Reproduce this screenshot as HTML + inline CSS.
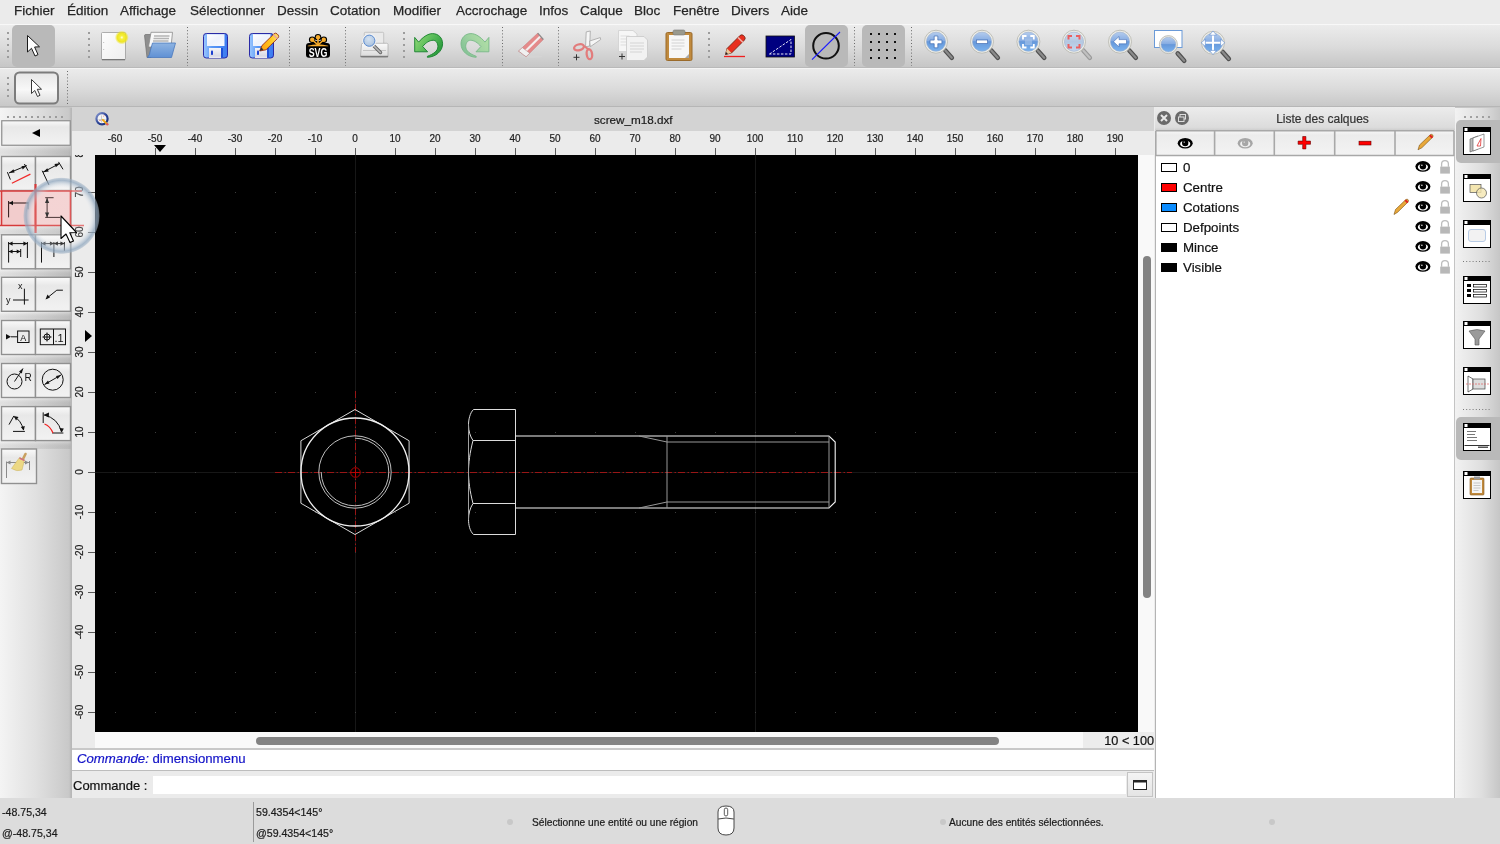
<!DOCTYPE html>
<html><head><meta charset="utf-8">
<style>
*{box-sizing:border-box;margin:0;padding:0}
html,body{width:1500px;height:844px;overflow:hidden;background:#ececec;font-family:"Liberation Sans",sans-serif;color:#222;position:relative}
body{will-change:transform}
div.a{-webkit-text-stroke:0.2px currentColor}
.a{position:absolute}
#menubar{left:0;top:0;width:1500px;height:24px;background:#ebebeb}
#menubar span{position:absolute;top:3px;font-size:13.5px;color:#262626;white-space:nowrap;-webkit-text-stroke:0.25px #262626}
#tb1{left:0;top:24px;width:1500px;height:44px;background:linear-gradient(#f8f8f8 0,#f8f8f8 1px,#ececec 1px,#dcdcdc 50%,#c6c6c6 43px,#b9b9b9 43px)}
#tb2{left:0;top:68px;width:1500px;height:39px;background:linear-gradient(#f4f4f4 0,#f4f4f4 1px,#ebebeb 1px,#dcdcdc 50%,#c8c8c8 38px,#b6b6b6 38px)}
#gapline{left:0;top:107px;width:1500px;height:1px;background:#c6c6c6}
#leftdock{left:0;top:108px;width:72px;height:690px;background:linear-gradient(90deg,#f2f2f2,#dadada 70%,#c8c8c8);border-right:1px solid #bdbdbd}
#tabhdr{left:72px;top:107px;width:1082px;height:24px;background:#d3d3d3}
#vscroll{left:1138px;top:155px;width:16px;height:577px;background:#f7f7f7}
#hscroll{left:95px;top:732px;width:988px;height:16px;background:#f7f7f7}
#gridlbl{left:1083px;top:732px;width:71px;height:16px;background:#ececec;font-size:13px;text-align:right;line-height:17px;color:#111}
#cmdhist{left:72px;top:749px;width:1082px;height:22px;background:#fff;border-top:1px solid #c6c6c6;border-bottom:1px solid #c6c6c6}
#cmdrow{left:72px;top:771px;width:1082px;height:27px;background:#ececec}
#rpanel{left:1155px;top:108px;width:300px;height:690px;background:#fff;border-left:1px solid #c8c8c8}
#rdock{left:1455px;top:108px;width:45px;height:690px;background:linear-gradient(90deg,#f0f0f0,#dedede 60%,#cacaca)}
#status{left:0;top:798px;width:1500px;height:46px;background:#dcdcdc;font-size:10.5px;color:#222}
.rl{position:absolute;top:2px;width:40px;text-align:center;font-size:10px;color:#222;line-height:12px}
.vl{position:absolute;left:-12.5px;width:40px;height:12px;margin-top:-6px;text-align:center;font-size:10px;color:#222;line-height:12px;transform:rotate(-90deg)}

</style></head><body>
<div id="menubar" class="a">
<span style="left:14px">Fichier</span>
<span style="left:67px">Édition</span>
<span style="left:120px">Affichage</span>
<span style="left:190px">Sélectionner</span>
<span style="left:277px">Dessin</span>
<span style="left:330px">Cotation</span>
<span style="left:393px">Modifier</span>
<span style="left:456px">Accrochage</span>
<span style="left:539px">Infos</span>
<span style="left:580px">Calque</span>
<span style="left:634px">Bloc</span>
<span style="left:673px">Fenêtre</span>
<span style="left:731px">Divers</span>
<span style="left:781px">Aide</span>
</div>
<div id="tb1" class="a"></div>
<div id="tb2" class="a"></div>
<div id="gapline" class="a"></div>
<svg class="a" style="left:0;top:0" width="1500" height="108" viewBox="0 0 1500 108">
<defs>
<linearGradient id="gPage" x1="0" y1="0" x2="1" y2="1"><stop offset="0" stop-color="#fdfdfd"/><stop offset="1" stop-color="#eeeeee"/></linearGradient><linearGradient id="gFold" x1="0" y1="0" x2="0" y2="1"><stop offset="0" stop-color="#8fb4e2"/><stop offset="1" stop-color="#5f90d4"/></linearGradient>
<radialGradient id="gGlow"><stop offset="0" stop-color="#ffffe8"/><stop offset="0.25" stop-color="#f6f040"/><stop offset="0.65" stop-color="#eee418" stop-opacity="0.95"/><stop offset="1" stop-color="#eee418" stop-opacity="0"/></radialGradient>
<linearGradient id="gBlue" x1="0" y1="0" x2="0" y2="1"><stop offset="0" stop-color="#9cc0ee"/><stop offset="0.5" stop-color="#5f93d8"/><stop offset="1" stop-color="#7aa6e2"/></linearGradient>
<radialGradient id="gLens" cx="0.45" cy="0.35" r="0.7"><stop offset="0" stop-color="#b8d4f6"/><stop offset="0.5" stop-color="#6c9ee0"/><stop offset="1" stop-color="#4a7ccc"/></radialGradient>
<radialGradient id="gLensG" cx="0.45" cy="0.35" r="0.7"><stop offset="0" stop-color="#d4e2f2"/><stop offset="1" stop-color="#a8c0dc"/></radialGradient>
<linearGradient id="gGreen" x1="0" y1="0" x2="1" y2="1"><stop offset="0" stop-color="#5ac85a"/><stop offset="1" stop-color="#1a8a2a"/></linearGradient>
<linearGradient id="gGreenP" x1="0" y1="0" x2="1" y2="1"><stop offset="0" stop-color="#8fd08f"/><stop offset="1" stop-color="#b8e0b0"/></linearGradient>
<linearGradient id="gTb2btn" x1="0" y1="0" x2="0" y2="1"><stop offset="0" stop-color="#e6e6e6"/><stop offset="0.55" stop-color="#f8f8f8"/><stop offset="1" stop-color="#dedede"/></linearGradient>
<linearGradient id="gUndo" x1="0" y1="0" x2="1" y2="0.6"><stop offset="0" stop-color="#96dc78"/><stop offset="0.6" stop-color="#52b856"/><stop offset="1" stop-color="#2a9a3c"/></linearGradient>
<linearGradient id="gRedo" x1="0" y1="0" x2="1" y2="0.6"><stop offset="0" stop-color="#b6e2a8"/><stop offset="0.6" stop-color="#9ed2a0"/><stop offset="1" stop-color="#84c296"/></linearGradient>
<linearGradient id="gPrn" x1="0" y1="0" x2="0" y2="1"><stop offset="0" stop-color="#fafafa"/><stop offset="1" stop-color="#d8d8d8"/></linearGradient>
<linearGradient id="gFlop" x1="0" y1="0" x2="1" y2="0"><stop offset="0" stop-color="#9cc8ff"/><stop offset="0.35" stop-color="#5a98f6"/><stop offset="1" stop-color="#3b7af0"/></linearGradient><linearGradient id="gLabel" x1="0" y1="0" x2="1" y2="1"><stop offset="0" stop-color="#ffffff"/><stop offset="0.5" stop-color="#eef2fc"/><stop offset="1" stop-color="#f8f9ff"/></linearGradient><linearGradient id="gShut" x1="0" y1="0" x2="0" y2="1"><stop offset="0" stop-color="#f4f4f8"/><stop offset="0.8" stop-color="#d8d8e4"/><stop offset="1" stop-color="#ececf4"/></linearGradient><linearGradient id="gPen" x1="0" y1="0" x2="1" y2="0"><stop offset="0" stop-color="#ff9a10"/><stop offset="0.6" stop-color="#ffc820"/><stop offset="1" stop-color="#ffe070"/></linearGradient>
<linearGradient id="gLens2" x1="0" y1="0" x2="0" y2="1"><stop offset="0" stop-color="#b4ccee"/><stop offset="0.45" stop-color="#86ace2"/><stop offset="0.5" stop-color="#6698da"/><stop offset="1" stop-color="#7ab2ee"/></linearGradient><linearGradient id="gLensD" x1="0" y1="0" x2="0" y2="1"><stop offset="0" stop-color="#d2deee"/><stop offset="0.5" stop-color="#b4c8e2"/><stop offset="1" stop-color="#c4d6ee"/></linearGradient>
</defs>
<!-- grips -->
<g fill="#9c9c9c">
<rect x="7" y="32" width="2" height="2"/><rect x="7" y="38" width="2" height="2"/><rect x="7" y="44" width="2" height="2"/><rect x="7" y="50" width="2" height="2"/><rect x="7" y="56" width="2" height="2"/>
<rect x="88" y="32" width="2" height="2"/><rect x="88" y="38" width="2" height="2"/><rect x="88" y="44" width="2" height="2"/><rect x="88" y="50" width="2" height="2"/><rect x="88" y="56" width="2" height="2"/>
<rect x="403" y="32" width="2" height="2"/><rect x="403" y="38" width="2" height="2"/><rect x="403" y="44" width="2" height="2"/><rect x="403" y="50" width="2" height="2"/><rect x="403" y="56" width="2" height="2"/>
<rect x="708" y="32" width="2" height="2"/><rect x="708" y="38" width="2" height="2"/><rect x="708" y="44" width="2" height="2"/><rect x="708" y="50" width="2" height="2"/><rect x="708" y="56" width="2" height="2"/>
<rect x="7" y="77" width="2" height="2"/><rect x="7" y="83" width="2" height="2"/><rect x="7" y="89" width="2" height="2"/><rect x="7" y="95" width="2" height="2"/>
</g>
<!-- dotted separators -->
<g stroke="#6a6a6a" stroke-width="1" stroke-dasharray="1 2.2">
<line x1="187.5" y1="27" x2="187.5" y2="66"/><line x1="289.5" y1="27" x2="289.5" y2="66"/><line x1="345.5" y1="27" x2="345.5" y2="66"/><line x1="502.5" y1="27" x2="502.5" y2="66"/><line x1="558.5" y1="27" x2="558.5" y2="66"/><line x1="854.5" y1="27" x2="854.5" y2="66"/><line x1="911.5" y1="27" x2="911.5" y2="66"/>
<line x1="67.5" y1="71" x2="67.5" y2="105"/>
</g>
<!-- active buttons -->
<rect x="12" y="25" width="43" height="42" rx="5" fill="#b9b9b9"/>
<rect x="805" y="25" width="43" height="42" rx="5" fill="#b9b9b9"/>
<rect x="862" y="25" width="43" height="42" rx="5" fill="#b9b9b9"/>
<!-- select arrow -->
<path d="M27.5 35.5 L27.5 52 L31.5 48.3 L35 56 L38 54.6 L34.6 47 L39.5 46.8 Z" fill="#fff" stroke="#1a1a1a" stroke-width="1" stroke-linejoin="round"/>
<!-- new doc -->
<rect x="101.5" y="32.5" width="24" height="27.3" rx="1" fill="url(#gPage)" stroke="#9c9c9c" stroke-width="0.8"/>
<path d="M102 59.6h23" stroke="#777" stroke-width="1.2"/>
<path d="M103 42.5h1.2M103 49.5h1.2" stroke="#bbb" stroke-width="0.8"/>
<circle cx="121.8" cy="37.5" r="7" fill="url(#gGlow)"/>
<!-- open folder -->
<path d="M144.5 35.5 Q144.5 34.5 146 34.5 L152 34.5 L151 57.5 L147 57.5 Z" fill="#8e8e8e" stroke="#6e6e6e" stroke-width="0.7"/>
<path d="M151 32.3 L172.5 32.3 L171 47 L148.5 47 Z" fill="#f8f8f8" stroke="#8a8a8a" stroke-width="0.8"/>
<path d="M154 36h15.5M153.5 38.5h15.5M153 41h15.5" stroke="#b4b4b4" stroke-width="1.3"/>
<path d="M152.5 43 L175.5 43 L171.5 57.5 L147.5 57.5 Q150 55 150.5 50 Z" fill="url(#gFold)" stroke="#4a78bc" stroke-width="0.8" stroke-linejoin="round"/>
<!-- save -->
<rect x="203.5" y="33.5" width="24" height="24.5" rx="2.8" fill="url(#gFlop)" stroke="#2a2aa6" stroke-width="1"/>
<rect x="207" y="34.2" width="17.5" height="11.8" fill="url(#gLabel)"/>
<rect x="209" y="48" width="12" height="10" fill="url(#gShut)"/>
<rect x="221" y="48" width="2" height="9.5" fill="#1f50d8"/>
<rect x="211" y="50.5" width="2" height="4.5" rx="0.8" fill="#1a3ed0"/>
<!-- save as -->
<rect x="249.5" y="33.5" width="24" height="24.5" rx="2.8" fill="url(#gFlop)" stroke="#2a2aa6" stroke-width="1"/>
<rect x="253" y="34.2" width="17.5" height="11.8" fill="url(#gLabel)"/>
<rect x="255" y="48" width="12" height="10" fill="url(#gShut)"/>
<rect x="267" y="48" width="2" height="9.5" fill="#1f50d8"/>
<rect x="257" y="50.5" width="2" height="4.5" rx="0.8" fill="#1a3ed0"/>
<path d="M259.7 51 L262 45.5 L274 33.8 Q275.5 32.5 277 33.8 L278.2 35 Q279.3 36.5 278 38 L266 49.8 Z" fill="url(#gPen)" stroke="#8a1a10" stroke-width="0.8" stroke-linejoin="round"/>
<path d="M273.2 34.6 L277.4 38.8" stroke="#e8a8a0" stroke-width="1.6"/>
<path d="M259.7 51 L261.2 47.5 L263.5 49.6 Z" fill="#333"/>
<!-- SVG logo -->
<g>
<rect x="306" y="43" width="24" height="14.8" rx="3" fill="#000"/>
<circle cx="318" cy="37.2" r="3.3" fill="#000"/><circle cx="312.2" cy="39.8" r="3.3" fill="#000"/><circle cx="323.8" cy="39.8" r="3.3" fill="#000"/>
<path d="M310 43.5 L326 43.5 L322 41 L314 41 Z" fill="#000"/>
<g stroke="#f7ac2c" stroke-width="1.6" stroke-linecap="round"><path d="M318 45 L318 37.5"/><path d="M318 45 L312.5 40"/><path d="M318 45 L323.5 40"/></g>
<circle cx="318" cy="37.2" r="2.2" fill="#f7ac2c"/><circle cx="312.2" cy="39.8" r="2.2" fill="#f7ac2c"/><circle cx="323.8" cy="39.8" r="2.2" fill="#f7ac2c"/>
<path d="M307.8 45.8 Q318 42.5 328.2 45.8 L328.2 46.2 L307.8 46.2 Z" fill="#f7ac2c"/>
<text x="318" y="57" font-family="Liberation Sans" font-weight="bold" font-size="13.5" fill="#fff" text-anchor="middle" textLength="18.7" lengthAdjust="spacingAndGlyphs">SVG</text>
</g>
<!-- print preview -->
<rect x="364.3" y="32.3" width="19.4" height="13" rx="1" fill="#eaeaea" stroke="#b4b4b4" stroke-width="0.7"/>
<path d="M361.5 44.5 Q361.5 43.3 363 43.3 L386.5 43.3 Q388 43.3 388 44.5 L388 56.3 Q388 57.5 386.5 57.5 L363 57.5 Q361.5 57.5 360.5 56.3 Z" fill="url(#gPrn)" stroke="#a8a8a8" stroke-width="0.7"/>
<path d="M360.5 56.5 H388" stroke="#7a7a7a" stroke-width="1.4"/>
<path d="M363 50.5 H386" stroke="#c4c4c4" stroke-width="1"/>
<path d="M373.5 45.5 L380.5 52.5" stroke="#666" stroke-width="3.4" stroke-linecap="round"/>
<path d="M373.5 45.5 L380.5 52.5" stroke="#b8b8b8" stroke-width="1.6" stroke-linecap="round"/>
<circle cx="369.3" cy="40.7" r="7" fill="#f4f4f4"/>
<circle cx="369.3" cy="40.7" r="5.6" fill="url(#gLensG)" stroke="#5a8ad0" stroke-width="1"/>
<!-- undo -->
<path d="M414.7 37.4 L418.6 42.1 C423 37 428 33.6 432.6 33.6 C438.5 33.6 442.6 38 442.6 43.8 C442.6 51 436 57 427.4 57.3 L427.4 56.3 C433.5 54 437.9 51 437.9 46.5 C437.9 42.5 435.5 40.3 433.2 40.3 C429.5 40.3 426 42.5 422.7 46.5 L427.6 51.8 L414.7 51.8 Z" fill="url(#gUndo)" stroke="#16802c" stroke-width="0.9" stroke-linejoin="round"/>
<!-- redo -->
<path d="M414.7 37.4 L418.6 42.1 C423 37 428 33.6 432.6 33.6 C438.5 33.6 442.6 38 442.6 43.8 C442.6 51 436 57 427.4 57.3 L427.4 56.3 C433.5 54 437.9 51 437.9 46.5 C437.9 42.5 435.5 40.3 433.2 40.3 C429.5 40.3 426 42.5 422.7 46.5 L427.6 51.8 L414.7 51.8 Z" transform="translate(903.6 0) scale(-1 1)" fill="url(#gRedo)" stroke="#78b888" stroke-width="0.9" stroke-linejoin="round"/>
<!-- eraser -->
<ellipse cx="530.5" cy="56.5" rx="12" ry="1.3" fill="#d4d4d4"/>
<path d="M518.6 51.1 L537.7 33.2 L543.3 39.5 L526.1 56.7 Z" fill="#e58a8a" stroke="#c47070" stroke-width="0.5"/>
<path d="M522.5 54 L540.5 36.3" stroke="#f4eeee" stroke-width="2.2"/>
<path d="M537.7 33.2 L543.3 39.5" stroke="#8a8a8a" stroke-width="1.2"/>
<path d="M518.6 51.1 L522.3 47.6 L529.8 53.2 L526.1 56.7 Z" fill="#f0f0f0" stroke="#b08080" stroke-width="0.5"/>
<!-- scissors -->
<path d="M586.2 31.9 L590.3 31 L589.7 46 L585.6 46.7 Z" fill="#f6f6f6" stroke="#9a9a9a" stroke-width="0.7"/>
<path d="M589.7 41 L600.3 37.6 L600.7 39.5 L590.3 46.7 Z" fill="#f6f6f6" stroke="#9a9a9a" stroke-width="0.7"/>
<ellipse cx="579" cy="47.3" rx="5" ry="2.9" transform="rotate(-15 579 47.3)" fill="none" stroke="#e27c7c" stroke-width="2.3"/>
<ellipse cx="589.4" cy="54.2" rx="2.7" ry="5" transform="rotate(-8 589.4 54.2)" fill="none" stroke="#e27c7c" stroke-width="2.3"/>
<path d="M584 46 L588 49" stroke="#e27c7c" stroke-width="2"/>
<path d="M573.5 57.3h6M576.5 54.3v6" stroke="#333" stroke-width="1"/>
<!-- copy -->
<path d="M618.5 30.5 L633 30.5 L637 34 L637 51.5 L618.5 51.5 Z" fill="#f6f6f6" stroke="#cfcfcf" stroke-width="0.8"/>
<path d="M620.5 36h9M620.5 39h11M620.5 42h9M620.5 45h11" stroke="#ddd"/>
<path d="M626.5 36.5 L644 36.5 L647.5 40 L647.5 57 L644 60.5 L626.5 60.5 Z" fill="#f2f2f2" stroke="#c8c8c8" stroke-width="0.8"/>
<path d="M630 43h14M630 46h14M630 49h14M630 52h12" stroke="#d4d4d4"/>
<path d="M619 56.5h6M622 53.5v6" stroke="#333" stroke-width="1"/>
<!-- paste -->
<rect x="666" y="32.5" width="26" height="28" rx="1.5" fill="#c08a3e" stroke="#9a6a2a" stroke-width="1"/>
<path d="M669 35 L689 35 L689 58 L669 58 Z" fill="#f7f7f7"/>
<path d="M685 58 L689 54 L689 58 Z" fill="#aaa"/>
<rect x="673" y="30" width="12" height="5" rx="1.5" fill="#9a9a8e" stroke="#777" stroke-width="0.6"/>
<path d="M671.5 40h13M671.5 43h13M671.5 46h13M671.5 49h10" stroke="#d2d2d2"/>
<!-- pencil red -->
<path d="M724 56.5h21" stroke="#f02020" stroke-width="1.3"/>
<path d="M725.5 54.5 L727 48.5 L740 35.5 Q742 34 743.5 35.5 L744.5 36.5 Q746 38 744.5 40 L731.5 53 Z" fill="#e83020" stroke="#6a2010" stroke-width="0.8" stroke-linejoin="round"/>
<path d="M725.5 54.5 L727 48.5 L731.5 53 Z" fill="#e8c89a"/>
<path d="M725.3 54.7 L726 52 L728 54 Z" fill="#222"/>
<path d="M738 37.5 L743 42.5" stroke="#f0b0a8" stroke-width="1.6"/>
<!-- draft -->
<rect x="766" y="36" width="28.5" height="21" fill="#000080" stroke="#111" stroke-width="0.8"/>
<path d="M769.5 54 L791 39.5 L791 54 Z" fill="none" stroke="#e8e8f8" stroke-width="1" stroke-dasharray="2.5 1.5"/>
<!-- circle slash -->
<circle cx="826" cy="45.8" r="12.8" fill="none" stroke="#111" stroke-width="2"/>
<path d="M812 59.7 L840 32" stroke="#1a1aff" stroke-width="1.1"/>
<!-- grid -->
<g fill="#111">
<rect x="870" y="33" width="2" height="2"/><rect x="878" y="33" width="2" height="2"/><rect x="886" y="33" width="2" height="2"/><rect x="894" y="33" width="2" height="2"/>
<rect x="870" y="41" width="2" height="2"/><rect x="878" y="41" width="2" height="2"/><rect x="886" y="41" width="2" height="2"/><rect x="894" y="41" width="2" height="2"/>
<rect x="870" y="49" width="2" height="2"/><rect x="878" y="49" width="2" height="2"/><rect x="886" y="49" width="2" height="2"/><rect x="894" y="49" width="2" height="2"/>
<rect x="870" y="57" width="2" height="2"/><rect x="878" y="57" width="2" height="2"/><rect x="886" y="57" width="2" height="2"/><rect x="894" y="57" width="2" height="2"/>
</g>
<!-- zoom icons -->
<path d="M945.3 50.5 L951.8 57.800000000000004" stroke="#505050" stroke-width="4.6" stroke-linecap="round"/><path d="M945.3 50.5 L951.8 57.800000000000004" stroke="#8a8a8a" stroke-width="2.2" stroke-linecap="round"/>
<circle cx="936" cy="41.7" r="11.5" fill="#eeeee8" stroke="#b4b4ac" stroke-width="0.8"/><circle cx="936" cy="41.7" r="9.6" fill="url(#gLens2)" stroke="#9aaecc" stroke-width="0.6"/>
<path d="M991.3 50.5 L997.8 57.800000000000004" stroke="#505050" stroke-width="4.6" stroke-linecap="round"/><path d="M991.3 50.5 L997.8 57.800000000000004" stroke="#8a8a8a" stroke-width="2.2" stroke-linecap="round"/>
<circle cx="982" cy="41.7" r="11.5" fill="#eeeee8" stroke="#b4b4ac" stroke-width="0.8"/><circle cx="982" cy="41.7" r="9.6" fill="url(#gLens2)" stroke="#9aaecc" stroke-width="0.6"/>
<path d="M1037.7 50.5 L1044.2 57.800000000000004" stroke="#505050" stroke-width="4.6" stroke-linecap="round"/><path d="M1037.7 50.5 L1044.2 57.800000000000004" stroke="#8a8a8a" stroke-width="2.2" stroke-linecap="round"/>
<circle cx="1028.4" cy="41.7" r="11.5" fill="#eeeee8" stroke="#b4b4ac" stroke-width="0.8"/><circle cx="1028.4" cy="41.7" r="9.6" fill="url(#gLens2)" stroke="#9aaecc" stroke-width="0.6"/>
<path d="M1083.3 50.5 L1089.8 57.800000000000004" stroke="#9a9a9a" stroke-width="4.6" stroke-linecap="round"/><path d="M1083.3 50.5 L1089.8 57.800000000000004" stroke="#c0c0c0" stroke-width="2.2" stroke-linecap="round"/>
<circle cx="1074" cy="41.7" r="11.5" fill="#eeeee8" stroke="#b4b4ac" stroke-width="0.8"/><circle cx="1074" cy="41.7" r="9.6" fill="url(#gLensD)" stroke="#9aaecc" stroke-width="0.6"/>
<path d="M1129.3 50.5 L1135.8 57.800000000000004" stroke="#505050" stroke-width="4.6" stroke-linecap="round"/><path d="M1129.3 50.5 L1135.8 57.800000000000004" stroke="#8a8a8a" stroke-width="2.2" stroke-linecap="round"/>
<circle cx="1120" cy="41.7" r="11.5" fill="#eeeee8" stroke="#b4b4ac" stroke-width="0.8"/><circle cx="1120" cy="41.7" r="9.6" fill="url(#gLens2)" stroke="#9aaecc" stroke-width="0.6"/>
<path d="M934.2 36 h3.6 v4.1 h4.1 v3.6 h-4.1 v4.1 h-3.6 v-4.1 h-4.1 v-3.6 h4.1 z" fill="#fff" stroke="#2a5aa8" stroke-width="0.6"/>
<rect x="976.3" y="40" width="11.4" height="3.6" fill="#fff" stroke="#2a5aa8" stroke-width="0.6"/>
<g fill="none" stroke="#fff" stroke-width="1.8"><path d="M1023 39.5v-3.5h3.5M1030.3 36h3.5v3.5M1033.8 44v3.5h-3.5M1026.5 47.5h-3.5v-3.5"/></g>
<rect x="1025" y="38.5" width="7" height="6.5" fill="#a8c4ea" opacity="0.6"/>
<g fill="none" stroke="#ea6060" stroke-width="2"><path d="M1068.5 39.5v-3.5h3.5M1076 36h3.5v3.5M1079.5 44v3.5h-3.5M1072 47.5h-3.5v-3.5"/></g>
<path d="M1113.5 41.7 L1119 36.5 L1119 39.6 L1126.5 39.6 L1126.5 43.8 L1119 43.8 L1119 46.9 Z" fill="#fff" stroke="#2a5aa8" stroke-width="0.5"/>
<rect x="1154.5" y="30.5" width="27.5" height="17" fill="#fff" stroke="#6a9ad8" stroke-width="1"/>
<path d="M1177.7 53.400000000000006 L1184.2 60.7" stroke="#505050" stroke-width="4.6" stroke-linecap="round"/><path d="M1177.7 53.400000000000006 L1184.2 60.7" stroke="#8a8a8a" stroke-width="2.2" stroke-linecap="round"/>
<circle cx="1168.4" cy="44.6" r="9" fill="#eeeee8" stroke="#b4b4ac" stroke-width="0.8"/><circle cx="1168.4" cy="44.6" r="7.4" fill="url(#gLens2)" stroke="#9aaecc" stroke-width="0.6"/>
<path d="M1222.3 51.599999999999994 L1228.8 58.9" stroke="#505050" stroke-width="4.6" stroke-linecap="round"/><path d="M1222.3 51.599999999999994 L1228.8 58.9" stroke="#8a8a8a" stroke-width="2.2" stroke-linecap="round"/>
<circle cx="1213" cy="42.8" r="11.5" fill="#eeeee8" stroke="#b4b4ac" stroke-width="0.8"/><circle cx="1213" cy="42.8" r="9.6" fill="url(#gLens2)" stroke="#9aaecc" stroke-width="0.6"/>
<path d="M1213 34v17.6M1204.2 42.8h17.6" stroke="#fff" stroke-width="2"/>
<path d="M1213 31l-3.6 4.2h7.2z M1213 54.6l-3.6-4.2h7.2z M1201.2 42.8l4.2-3.6v7.2z M1224.8 42.8l-4.2-3.6v7.2z" fill="#fff" stroke="#5a8ad0" stroke-width="0.6"/>
<!-- toolbar2 select button -->
<rect x="15" y="72.5" width="43" height="31" rx="4.5" fill="url(#gTb2btn)" stroke="#7c7c7c" stroke-width="2"/>
<path d="M31.5 79.5 L31.5 93.5 L34.8 90.5 L37.5 96.5 L40 95.3 L37.3 89.3 L41.5 89.2 Z" fill="#fff" stroke="#222" stroke-width="0.9" stroke-linejoin="round"/>
</svg>

<svg class="a" style="left:0;top:108px" width="72" height="690" viewBox="0 108 72 690">
<defs>
<linearGradient id="gDock" x1="0" y1="0" x2="1" y2="0"><stop offset="0" stop-color="#f4f4f4"/><stop offset="0.5" stop-color="#e0e0e0"/><stop offset="0.95" stop-color="#c9c9c9"/><stop offset="1" stop-color="#bcbcbc"/></linearGradient>
<linearGradient id="gBtn" x1="0" y1="0" x2="0" y2="1"><stop offset="0" stop-color="#fafafa"/><stop offset="0.25" stop-color="#e8e8e8"/><stop offset="1" stop-color="#f2f2f2"/></linearGradient>
<linearGradient id="gBand" x1="0" y1="0" x2="0" y2="1"><stop offset="0" stop-color="#fff" stop-opacity="0.25"/><stop offset="1" stop-color="#000" stop-opacity="0.06"/></linearGradient>
<radialGradient id="gRing" cx="0.5" cy="0.5" r="0.5"><stop offset="0.72" stop-color="#fff" stop-opacity="0.15"/><stop offset="0.82" stop-color="#c8d4e0" stop-opacity="0.45"/><stop offset="0.92" stop-color="#8ea6be" stop-opacity="0.75"/><stop offset="0.97" stop-color="#9cb0c4" stop-opacity="0.6"/><stop offset="1" stop-color="#9cb0c4" stop-opacity="0"/></radialGradient>
</defs>
<rect x="0" y="108" width="72" height="690" fill="url(#gDock)"/>
<rect x="0" y="145" width="72" height="11" fill="url(#gBand)"/>
<rect x="0" y="226" width="72" height="9" fill="url(#gBand)"/>
<rect x="0" y="269" width="72" height="8" fill="url(#gBand)"/>
<rect x="0" y="312" width="72" height="8" fill="url(#gBand)"/>
<rect x="0" y="355" width="72" height="8" fill="url(#gBand)"/>
<rect x="0" y="398" width="72" height="8" fill="url(#gBand)"/>
<rect x="0" y="441" width="72" height="8" fill="url(#gBand)"/>
<rect x="70.5" y="108" width="1.5" height="690" fill="#b8b8b8"/>
<g fill="#9c9c9c"><rect x="7" y="116" width="2" height="2"/><rect x="13" y="116" width="2" height="2"/><rect x="19" y="116" width="2" height="2"/><rect x="25" y="116" width="2" height="2"/><rect x="31" y="116" width="2" height="2"/><rect x="37" y="116" width="2" height="2"/><rect x="43" y="116" width="2" height="2"/><rect x="49" y="116" width="2" height="2"/><rect x="55" y="116" width="2" height="2"/><rect x="61" y="116" width="2" height="2"/></g>
<rect x="1.75" y="120.75" width="68.5" height="24.5" fill="url(#gBtn)" stroke="#8e8e8e" stroke-width="1.2"/>
<path d="M32 133 L40 129 L40 137 Z" fill="#000"/>
<g fill="url(#gBtn)" stroke="#909090" stroke-width="1.4">
<rect x="1.5" y="156.5" width="34" height="34"/><rect x="35.5" y="156.5" width="35" height="34"/>
<rect x="1.5" y="234.8" width="34" height="34"/><rect x="35.5" y="234.8" width="35" height="34"/>
<rect x="1.5" y="277.3" width="34" height="34"/><rect x="35.5" y="277.3" width="35" height="34"/>
<rect x="1.5" y="320.5" width="34" height="34"/><rect x="35.5" y="320.5" width="35" height="34"/>
<rect x="1.5" y="363.5" width="34" height="34"/><rect x="35.5" y="363.5" width="35" height="34"/>
<rect x="1.5" y="406.6" width="34" height="34"/><rect x="35.5" y="406.6" width="35" height="34"/>
<rect x="1.5" y="449" width="35" height="34.5"/>
</g>
<!-- red highlighted row -->
<rect x="1.5" y="190.7" width="69" height="34.8" fill="#f2cccc"/>
<g stroke="#d63a3a" stroke-width="1.6">
<path d="M0 191 H72 M0 225.5 H72"/>
<path d="M1.5 191 V225.5 M70.5 191 V225.5"/><path d="M35.5 184 V233" stroke-width="2.2"/>
</g>
<!-- icons -->
<g stroke="#111" stroke-width="1" fill="none">
<!-- r1c1 aligned -->
<path d="M7.4 172.2 L10.4 179.6 M8.9 173 L26.7 165.6 M24.4 164 L28.1 170.7"/>
<!-- r1c2 -->
<path d="M43 172.2 L60 163.3 M42.2 170.7 L48.9 184.8 M58.5 161.9 L63 169.3"/>
<!-- r2c1 horizontal -->
<path d="M8.6 201 V217.4 M8.9 203 H28.1" stroke="#2a1414"/>
<path d="M28.1 201.9 V209.3" stroke="#777"/>
<!-- r2c2 vertical -->
<path d="M45.2 197.7 H53.6 M47.1 198 V217.4 M45.2 217.4 H60" stroke="#2a1414"/>
<!-- r3c1 baseline -->
<path d="M8.6 242 V262.6 M8.6 243.6 H27.4 M8.6 251.5 H20.7 M27.4 242 V258 M20.7 249 V257"/>
<!-- r3c2 continued -->
<path d="M41.5 242 V262.6 M41.5 243.6 H64.4 M53.9 242 V257 M64.4 242 V250.7"/>
<!-- r4c1 ordinate -->
<path d="M24.4 288.7 V304.6 M13 300 H28.6"/>
<!-- r4c2 leader -->
<path d="M62.9 290.2 H56.8 L46.5 298.5"/>
<!-- r5c1 datum -->
<path d="M11 336.8 H17.6"/>
<rect x="17.6" y="331" width="11.4" height="11.5"/>
<!-- r5c2 tolerance -->
<rect x="40.3" y="329" width="25.2" height="15.7"/>
<path d="M53.5 329 V344.7"/>
<circle cx="47" cy="337" r="3"/>
<path d="M42.5 337 H51.5 M47 332.5 V341.5"/>
<!-- r6c1 radius -->
<circle cx="14.5" cy="381.5" r="7.5"/>
<path d="M14.5 381.5 L23 368.5"/>
<!-- r6c2 diameter -->
<circle cx="52.7" cy="379.7" r="10.5"/>
<path d="M44.5 384.5 L61 375"/>
<!-- r7c1 angular -->
<path d="M9 424.6 L13.9 415.9 M13 431.4 H24.9"/>
<path d="M14.3 417 Q21 420 23.5 430"/>
<!-- r7c2 -->
<path d="M43.2 412.4 V423 M52.2 433 H63.4"/>
<path d="M44 415 Q58 418 61.5 432"/>
</g>
<g fill="#111">
<path d="M8.9 173 L13.5 169.3 L14.6 172.5 Z M26.7 165.6 L21.5 166.3 L22.7 169.5 Z"/>
<path d="M43 172.2 L47.3 168.3 L48.7 171.4 Z M60 163.3 L54.5 164 L55.9 167.2 Z"/>
<path d="M9 203 L13 200.8 L13 205.2 Z"/>
<path d="M47.1 198 L45 203 L49.2 203 Z M47.1 217.4 L45 212.4 L49.2 212.4 Z"/>
<path d="M8.6 243.6 L12.6 241.5 L12.6 245.7 Z M27.4 243.6 L23.4 241.5 L23.4 245.7 Z M8.6 251.5 L12.6 249.4 L12.6 253.6 Z M20.7 251.5 L16.7 249.4 L16.7 253.6 Z"/>
<path d="M41.5 243.6 L45.5 241.5 L45.5 245.7 Z M53.9 243.6 L49.9 241.5 L49.9 245.7 Z M53.9 243.6 L57.9 241.5 L57.9 245.7 Z M64.4 243.6 L60.4 241.5 L60.4 245.7 Z"/>
<path d="M45.5 299.5 L47.5 294.5 L50 297.5 Z"/>
<path d="M6 334 L6 339.6 L11 336.8 Z"/>
<path d="M23 368.5 L19 371.5 L21.8 373.5 Z"/>
<path d="M44.5 384.5 L48 380.5 L49.5 383.6 Z M61 375 L57.5 379 L56 375.9 Z"/>
<path d="M13.9 415.9 L18.5 417 L16 420.5 Z M23.8 430.5 L20.8 427 L24.8 426 Z"/>
<path d="M44 414.8 L49 412.5 L48.8 417.5 Z M61.8 432.5 L59.5 428 L63.8 428.5 Z"/>
</g>
<text x="18" y="289" font-family="Liberation Sans" font-size="9" fill="#111">x</text>
<text x="6" y="303" font-family="Liberation Sans" font-size="9" fill="#111">y</text>
<text x="23.3" y="341" font-family="Liberation Sans" font-size="9" fill="#111" text-anchor="middle">A</text>
<text x="54.5" y="342" font-family="Liberation Sans" font-size="11" fill="#111">.1</text>
<text x="24.5" y="381" font-family="Liberation Sans" font-size="10" fill="#111">R</text>
<path d="M44.5 424 Q50 426 53 433" stroke="#f02020" stroke-width="1.2" fill="none"/>
<!-- broom -->
<g stroke="#8a8a8a" stroke-width="1" fill="none"><path d="M6.5 461.5 V478 M6.5 462.5 H29 M29.5 461 V470"/></g>
<path d="M6.5 462.5 L10.5 460.5 L10.5 464.5 Z M29 462.5 L25 460.5 L25 464.5 Z" fill="#8a8a8a"/>
<path d="M25.5 454 L23 459" stroke="#c8a060" stroke-width="2.6" stroke-linecap="round"/>
<path d="M19.5 457.5 L24.5 460 L22 470 Q17 472 11.5 468.5 Z" fill="#ecd884" stroke="#c9b060" stroke-width="0.5"/>
<path d="M19.5 458 L24.5 460.5" stroke="#d07080" stroke-width="1.5"/>
<path d="M11.9 183.3 L30.4 174.1" stroke="#f02a2a" stroke-width="1.2"/>
</svg>

<div id="tabhdr" class="a"></div>
<div class="a" style="left:72px;top:131px;width:1083px;height:24px;background:#ebebeb;overflow:hidden">
<span class="rl" style="left:23px">-60</span>
<span class="rl" style="left:63px">-50</span>
<span class="rl" style="left:103px">-40</span>
<span class="rl" style="left:143px">-30</span>
<span class="rl" style="left:183px">-20</span>
<span class="rl" style="left:223px">-10</span>
<span class="rl" style="left:263px">0</span>
<span class="rl" style="left:303px">10</span>
<span class="rl" style="left:343px">20</span>
<span class="rl" style="left:383px">30</span>
<span class="rl" style="left:423px">40</span>
<span class="rl" style="left:463px">50</span>
<span class="rl" style="left:503px">60</span>
<span class="rl" style="left:543px">70</span>
<span class="rl" style="left:583px">80</span>
<span class="rl" style="left:623px">90</span>
<span class="rl" style="left:663px">100</span>
<span class="rl" style="left:703px">110</span>
<span class="rl" style="left:743px">120</span>
<span class="rl" style="left:783px">130</span>
<span class="rl" style="left:823px">140</span>
<span class="rl" style="left:863px">150</span>
<span class="rl" style="left:903px">160</span>
<span class="rl" style="left:943px">170</span>
<span class="rl" style="left:983px">180</span>
<span class="rl" style="left:1023px">190</span>
</div>
<svg class="a" style="left:0;top:0" width="1155" height="160"><path d="M115.5 148V155M155.5 148V155M195.5 148V155M235.5 148V155M275.5 148V155M315.5 148V155M355.5 148V155M395.5 148V155M435.5 148V155M475.5 148V155M515.5 148V155M555.5 148V155M595.5 148V155M635.5 148V155M675.5 148V155M715.5 148V155M755.5 148V155M795.5 148V155M835.5 148V155M875.5 148V155M915.5 148V155M955.5 148V155M995.5 148V155M1035.5 148V155M1075.5 148V155M1115.5 148V155" stroke="#5a5a5a" stroke-width="1"/><path d="M154 145h12l-6 7z" fill="#000"/></svg>
<div class="a" style="left:72px;top:155px;width:23px;height:593px;background:#ebebeb;overflow:hidden">
<span class="vl" style="top:-3px">80</span>
<span class="vl" style="top:37px">70</span>
<span class="vl" style="top:77px">60</span>
<span class="vl" style="top:117px">50</span>
<span class="vl" style="top:157px">40</span>
<span class="vl" style="top:197px">30</span>
<span class="vl" style="top:237px">20</span>
<span class="vl" style="top:277px">10</span>
<span class="vl" style="top:317px">0</span>
<span class="vl" style="top:357px">-10</span>
<span class="vl" style="top:397px">-20</span>
<span class="vl" style="top:437px">-30</span>
<span class="vl" style="top:477px">-40</span>
<span class="vl" style="top:517px">-50</span>
<span class="vl" style="top:557px">-60</span>
</div>
<svg class="a" style="left:0;top:0" width="100" height="740"><path d="M88 192.5H95M88 232.5H95M88 272.5H95M88 312.5H95M88 352.5H95M88 392.5H95M88 432.5H95M88 472.5H95M88 512.5H95M88 552.5H95M88 592.5H95M88 632.5H95M88 672.5H95M88 712.5H95" stroke="#5a5a5a" stroke-width="1"/><path d="M85 330v12l7-6z" fill="#000"/></svg>
<svg class="a" style="left:95px;top:155px" width="1043" height="577" viewBox="95 155 1043 577">
<rect x="95" y="155" width="1043" height="577" fill="#000"/>
<g stroke="#171717" stroke-width="1"><line x1="355.5" y1="155" x2="355.5" y2="732"/><line x1="755.5" y1="155" x2="755.5" y2="732"/><line x1="95" y1="472.5" x2="1138" y2="472.5"/></g>
<path fill="#3c3c3c" d="M115 192h1v1h-1zM115 232h1v1h-1zM115 272h1v1h-1zM115 312h1v1h-1zM115 352h1v1h-1zM115 392h1v1h-1zM115 432h1v1h-1zM115 472h1v1h-1zM115 512h1v1h-1zM115 552h1v1h-1zM115 592h1v1h-1zM115 632h1v1h-1zM115 672h1v1h-1zM115 712h1v1h-1zM155 192h1v1h-1zM155 232h1v1h-1zM155 272h1v1h-1zM155 312h1v1h-1zM155 352h1v1h-1zM155 392h1v1h-1zM155 432h1v1h-1zM155 472h1v1h-1zM155 512h1v1h-1zM155 552h1v1h-1zM155 592h1v1h-1zM155 632h1v1h-1zM155 672h1v1h-1zM155 712h1v1h-1zM195 192h1v1h-1zM195 232h1v1h-1zM195 272h1v1h-1zM195 312h1v1h-1zM195 352h1v1h-1zM195 392h1v1h-1zM195 432h1v1h-1zM195 472h1v1h-1zM195 512h1v1h-1zM195 552h1v1h-1zM195 592h1v1h-1zM195 632h1v1h-1zM195 672h1v1h-1zM195 712h1v1h-1zM235 192h1v1h-1zM235 232h1v1h-1zM235 272h1v1h-1zM235 312h1v1h-1zM235 352h1v1h-1zM235 392h1v1h-1zM235 432h1v1h-1zM235 472h1v1h-1zM235 512h1v1h-1zM235 552h1v1h-1zM235 592h1v1h-1zM235 632h1v1h-1zM235 672h1v1h-1zM235 712h1v1h-1zM275 192h1v1h-1zM275 232h1v1h-1zM275 272h1v1h-1zM275 312h1v1h-1zM275 352h1v1h-1zM275 392h1v1h-1zM275 432h1v1h-1zM275 472h1v1h-1zM275 512h1v1h-1zM275 552h1v1h-1zM275 592h1v1h-1zM275 632h1v1h-1zM275 672h1v1h-1zM275 712h1v1h-1zM315 192h1v1h-1zM315 232h1v1h-1zM315 272h1v1h-1zM315 312h1v1h-1zM315 352h1v1h-1zM315 392h1v1h-1zM315 432h1v1h-1zM315 472h1v1h-1zM315 512h1v1h-1zM315 552h1v1h-1zM315 592h1v1h-1zM315 632h1v1h-1zM315 672h1v1h-1zM315 712h1v1h-1zM355 192h1v1h-1zM355 232h1v1h-1zM355 272h1v1h-1zM355 312h1v1h-1zM355 352h1v1h-1zM355 392h1v1h-1zM355 432h1v1h-1zM355 472h1v1h-1zM355 512h1v1h-1zM355 552h1v1h-1zM355 592h1v1h-1zM355 632h1v1h-1zM355 672h1v1h-1zM355 712h1v1h-1zM395 192h1v1h-1zM395 232h1v1h-1zM395 272h1v1h-1zM395 312h1v1h-1zM395 352h1v1h-1zM395 392h1v1h-1zM395 432h1v1h-1zM395 472h1v1h-1zM395 512h1v1h-1zM395 552h1v1h-1zM395 592h1v1h-1zM395 632h1v1h-1zM395 672h1v1h-1zM395 712h1v1h-1zM435 192h1v1h-1zM435 232h1v1h-1zM435 272h1v1h-1zM435 312h1v1h-1zM435 352h1v1h-1zM435 392h1v1h-1zM435 432h1v1h-1zM435 472h1v1h-1zM435 512h1v1h-1zM435 552h1v1h-1zM435 592h1v1h-1zM435 632h1v1h-1zM435 672h1v1h-1zM435 712h1v1h-1zM475 192h1v1h-1zM475 232h1v1h-1zM475 272h1v1h-1zM475 312h1v1h-1zM475 352h1v1h-1zM475 392h1v1h-1zM475 432h1v1h-1zM475 472h1v1h-1zM475 512h1v1h-1zM475 552h1v1h-1zM475 592h1v1h-1zM475 632h1v1h-1zM475 672h1v1h-1zM475 712h1v1h-1zM515 192h1v1h-1zM515 232h1v1h-1zM515 272h1v1h-1zM515 312h1v1h-1zM515 352h1v1h-1zM515 392h1v1h-1zM515 432h1v1h-1zM515 472h1v1h-1zM515 512h1v1h-1zM515 552h1v1h-1zM515 592h1v1h-1zM515 632h1v1h-1zM515 672h1v1h-1zM515 712h1v1h-1zM555 192h1v1h-1zM555 232h1v1h-1zM555 272h1v1h-1zM555 312h1v1h-1zM555 352h1v1h-1zM555 392h1v1h-1zM555 432h1v1h-1zM555 472h1v1h-1zM555 512h1v1h-1zM555 552h1v1h-1zM555 592h1v1h-1zM555 632h1v1h-1zM555 672h1v1h-1zM555 712h1v1h-1zM595 192h1v1h-1zM595 232h1v1h-1zM595 272h1v1h-1zM595 312h1v1h-1zM595 352h1v1h-1zM595 392h1v1h-1zM595 432h1v1h-1zM595 472h1v1h-1zM595 512h1v1h-1zM595 552h1v1h-1zM595 592h1v1h-1zM595 632h1v1h-1zM595 672h1v1h-1zM595 712h1v1h-1zM635 192h1v1h-1zM635 232h1v1h-1zM635 272h1v1h-1zM635 312h1v1h-1zM635 352h1v1h-1zM635 392h1v1h-1zM635 432h1v1h-1zM635 472h1v1h-1zM635 512h1v1h-1zM635 552h1v1h-1zM635 592h1v1h-1zM635 632h1v1h-1zM635 672h1v1h-1zM635 712h1v1h-1zM675 192h1v1h-1zM675 232h1v1h-1zM675 272h1v1h-1zM675 312h1v1h-1zM675 352h1v1h-1zM675 392h1v1h-1zM675 432h1v1h-1zM675 472h1v1h-1zM675 512h1v1h-1zM675 552h1v1h-1zM675 592h1v1h-1zM675 632h1v1h-1zM675 672h1v1h-1zM675 712h1v1h-1zM715 192h1v1h-1zM715 232h1v1h-1zM715 272h1v1h-1zM715 312h1v1h-1zM715 352h1v1h-1zM715 392h1v1h-1zM715 432h1v1h-1zM715 472h1v1h-1zM715 512h1v1h-1zM715 552h1v1h-1zM715 592h1v1h-1zM715 632h1v1h-1zM715 672h1v1h-1zM715 712h1v1h-1zM755 192h1v1h-1zM755 232h1v1h-1zM755 272h1v1h-1zM755 312h1v1h-1zM755 352h1v1h-1zM755 392h1v1h-1zM755 432h1v1h-1zM755 472h1v1h-1zM755 512h1v1h-1zM755 552h1v1h-1zM755 592h1v1h-1zM755 632h1v1h-1zM755 672h1v1h-1zM755 712h1v1h-1zM795 192h1v1h-1zM795 232h1v1h-1zM795 272h1v1h-1zM795 312h1v1h-1zM795 352h1v1h-1zM795 392h1v1h-1zM795 432h1v1h-1zM795 472h1v1h-1zM795 512h1v1h-1zM795 552h1v1h-1zM795 592h1v1h-1zM795 632h1v1h-1zM795 672h1v1h-1zM795 712h1v1h-1zM835 192h1v1h-1zM835 232h1v1h-1zM835 272h1v1h-1zM835 312h1v1h-1zM835 352h1v1h-1zM835 392h1v1h-1zM835 432h1v1h-1zM835 472h1v1h-1zM835 512h1v1h-1zM835 552h1v1h-1zM835 592h1v1h-1zM835 632h1v1h-1zM835 672h1v1h-1zM835 712h1v1h-1zM875 192h1v1h-1zM875 232h1v1h-1zM875 272h1v1h-1zM875 312h1v1h-1zM875 352h1v1h-1zM875 392h1v1h-1zM875 432h1v1h-1zM875 472h1v1h-1zM875 512h1v1h-1zM875 552h1v1h-1zM875 592h1v1h-1zM875 632h1v1h-1zM875 672h1v1h-1zM875 712h1v1h-1zM915 192h1v1h-1zM915 232h1v1h-1zM915 272h1v1h-1zM915 312h1v1h-1zM915 352h1v1h-1zM915 392h1v1h-1zM915 432h1v1h-1zM915 472h1v1h-1zM915 512h1v1h-1zM915 552h1v1h-1zM915 592h1v1h-1zM915 632h1v1h-1zM915 672h1v1h-1zM915 712h1v1h-1zM955 192h1v1h-1zM955 232h1v1h-1zM955 272h1v1h-1zM955 312h1v1h-1zM955 352h1v1h-1zM955 392h1v1h-1zM955 432h1v1h-1zM955 472h1v1h-1zM955 512h1v1h-1zM955 552h1v1h-1zM955 592h1v1h-1zM955 632h1v1h-1zM955 672h1v1h-1zM955 712h1v1h-1zM995 192h1v1h-1zM995 232h1v1h-1zM995 272h1v1h-1zM995 312h1v1h-1zM995 352h1v1h-1zM995 392h1v1h-1zM995 432h1v1h-1zM995 472h1v1h-1zM995 512h1v1h-1zM995 552h1v1h-1zM995 592h1v1h-1zM995 632h1v1h-1zM995 672h1v1h-1zM995 712h1v1h-1zM1035 192h1v1h-1zM1035 232h1v1h-1zM1035 272h1v1h-1zM1035 312h1v1h-1zM1035 352h1v1h-1zM1035 392h1v1h-1zM1035 432h1v1h-1zM1035 472h1v1h-1zM1035 512h1v1h-1zM1035 552h1v1h-1zM1035 592h1v1h-1zM1035 632h1v1h-1zM1035 672h1v1h-1zM1035 712h1v1h-1zM1075 192h1v1h-1zM1075 232h1v1h-1zM1075 272h1v1h-1zM1075 312h1v1h-1zM1075 352h1v1h-1zM1075 392h1v1h-1zM1075 432h1v1h-1zM1075 472h1v1h-1zM1075 512h1v1h-1zM1075 552h1v1h-1zM1075 592h1v1h-1zM1075 632h1v1h-1zM1075 672h1v1h-1zM1075 712h1v1h-1zM1115 192h1v1h-1zM1115 232h1v1h-1zM1115 272h1v1h-1zM1115 312h1v1h-1zM1115 352h1v1h-1zM1115 392h1v1h-1zM1115 432h1v1h-1zM1115 472h1v1h-1zM1115 512h1v1h-1zM1115 552h1v1h-1zM1115 592h1v1h-1zM1115 632h1v1h-1zM1115 672h1v1h-1zM1115 712h1v1h-1z"/>
<g stroke="#981616" stroke-width="1" stroke-dasharray="7 2.5 1.5 2" fill="none">
<line x1="275" y1="472.5" x2="852" y2="472.5"/>
<line x1="355.5" y1="391" x2="355.5" y2="552"/>
</g>
<g stroke="#c00000" stroke-width="0.9" fill="none"><circle cx="355.5" cy="472.5" r="4.8"/><line x1="351" y1="472.5" x2="360" y2="472.5"/><line x1="355.5" y1="468" x2="355.5" y2="477"/></g>
<g stroke="#d8d8d8" stroke-width="1" fill="none">
<path d="M355 409.5 L409.1 440.75 L409.1 503.25 L355 534.5 L300.9 503.25 L300.9 440.75 Z"/>
</g>
<circle cx="355" cy="472" r="54" stroke="#f0f0f0" stroke-width="1.3" fill="none"/>
<circle cx="355" cy="472" r="36.2" stroke="#bdbdbd" stroke-width="1" fill="none"/>
<path d="M355 438.2 A33.8 33.8 0 1 1 321.2 472" stroke="#bdbdbd" stroke-width="1" fill="none"/>
<g stroke="#dcdcdc" stroke-width="1" fill="none">
<path d="M473.5 409.5 C469.8 413 468.5 420 468.5 425 C468.5 431 470 436 473 440.5 C469.8 453 468.5 463 468.5 472 C468.5 481 469.8 491 473 503.5 C470 508 468.5 514 468.5 519 C468.5 525 469.8 531 473.5 534.5"/>
<path d="M468.5 424 V520" stroke="#a0a0a0"/>
<path d="M473.5 409.5 H515.5 V534.5 H473.5"/>
<path d="M473 440.5 H515.5 M473 503.5 H515.5"/>
</g>
<g stroke="#f4f4f4" stroke-width="1.1" fill="none">
<path d="M515.5 436 H829 L835.2 442 V502 L829 508 H515.5"/>
</g>
<g stroke="#989898" stroke-width="1" fill="none">
<path d="M639 436 L667 442 H829 M639 508 L667 502 H829 M667 436 V508 M829 436 V508"/>
</g>
</svg>
<div class="a" style="left:594px;top:113px;font-size:11.7px;line-height:14px;color:#1a1a1a;white-space:nowrap">screw_m18.dxf</div>
<svg class="a" style="left:90px;top:108px" width="24" height="22" viewBox="90 108 24 22">
<defs><linearGradient id="gTabR" x1="0" y1="0" x2="1" y2="1"><stop offset="0" stop-color="#8a9ad0"/><stop offset="0.5" stop-color="#2c4496"/><stop offset="1" stop-color="#1c2e78"/></linearGradient></defs>
<circle cx="102" cy="118.8" r="5.6" fill="#f4f4f4" stroke="url(#gTabR)" stroke-width="2.2"/>
<path d="M98.5 119.5h7M101.5 115.5v7" stroke="#b0b0b0" stroke-width="0.6"/>
<path d="M99 120.5h2M103 116.5l1.5-1" stroke="#e07070" stroke-width="0.6"/>
<path d="M102.8 119.8 L107 124" stroke="#f0a818" stroke-width="1.9" stroke-linecap="round"/>
<circle cx="107.3" cy="124.3" r="1.2" fill="#e05a5a"/>
</svg>
<div class="a" style="left:1138px;top:155px;width:16px;height:577px;background:#f9f9f9"></div>
<div class="a" style="left:1143px;top:255.5px;width:8px;height:342px;border-radius:4px;background:#838383"></div>
<div class="a" style="left:95px;top:732px;width:988px;height:16px;background:#f9f9f9"></div>
<div class="a" style="left:255.5px;top:737px;width:743.5px;height:8px;border-radius:4px;background:#838383"></div>
<div class="a" style="left:72px;top:732px;width:23px;height:16px;background:#ebebeb"></div>
<div class="a" style="left:1083px;top:732px;width:71px;height:16px;background:#ececec"></div>
<div class="a" style="left:1083px;top:734px;width:71px;font-size:12.7px;line-height:15px;text-align:right;color:#111;white-space:nowrap">10 &lt; 100</div>
<div class="a" style="left:72px;top:748px;width:1083px;height:2px;background:#c8c8c8"></div>
<div class="a" style="left:72px;top:750px;width:1082px;height:20px;background:#fff"></div>
<div class="a" style="left:77px;top:751px;font-size:13.2px;line-height:15px;color:#1414c8;white-space:nowrap"><i>Commande:</i> dimensionmenu</div>
<div class="a" style="left:72px;top:770px;width:1083px;height:1px;background:#bdbdbd"></div>
<div class="a" style="left:72px;top:771px;width:1083px;height:27px;background:#ebebeb"></div>
<div class="a" style="left:73px;top:778px;font-size:13px;line-height:15px;color:#111;white-space:nowrap">Commande :</div>
<div class="a" style="left:153px;top:776px;width:973px;height:18px;background:#fff"></div>
<div class="a" style="left:1127px;top:772px;width:26px;height:25px;background:linear-gradient(#f4f4f4,#e4e4e4);border:1px solid #c4c4c4"></div>
<svg class="a" style="left:1127px;top:772px" width="26" height="25"><rect x="6.5" y="8.5" width="13" height="9" fill="#fff" stroke="#222" stroke-width="1"/><rect x="6" y="8" width="14" height="2.5" fill="#222"/></svg>
<div class="a" style="left:0;top:798px;width:1500px;height:46px;background:#dcdcdc"></div>
<div class="a" style="left:2px;top:806px;font-size:10.6px;line-height:13px;color:#1a1a1a;white-space:nowrap">-48.75,34</div>
<div class="a" style="left:2px;top:826.5px;font-size:10.6px;line-height:13px;color:#1a1a1a;white-space:nowrap">@-48.75,34</div>
<div class="a" style="left:253px;top:802px;width:1px;height:40px;background:#9a9a9a"></div>
<div class="a" style="left:256px;top:806px;font-size:10.6px;line-height:13px;color:#1a1a1a;white-space:nowrap">59.4354&lt;145°</div>
<div class="a" style="left:256px;top:826.5px;font-size:10.6px;line-height:13px;color:#1a1a1a;white-space:nowrap">@59.4354&lt;145°</div>
<div class="a" style="left:506.5px;top:819px;width:6px;height:6px;border-radius:3px;background:#c8c8c8"></div>
<div class="a" style="left:532px;top:816px;font-size:10.2px;line-height:13px;color:#1a1a1a;white-space:nowrap">Sélectionne une entité ou une région</div>
<svg class="a" style="left:715px;top:804px" width="22" height="34"><path d="M3 8 Q3 2 11 2 Q19 2 19 8 V24 Q19 31 11 31 Q3 31 3 24 Z" fill="#fff" stroke="#333" stroke-width="0.9"/><path d="M3.2 15 Q11 13 18.8 15" fill="none" stroke="#333" stroke-width="0.9"/><rect x="9.3" y="4" width="3.4" height="8" rx="1.7" fill="#fff" stroke="#333" stroke-width="0.8"/></svg>
<div class="a" style="left:940px;top:819px;width:6px;height:6px;border-radius:3px;background:#c8c8c8"></div>
<div class="a" style="left:949px;top:816px;font-size:10.2px;line-height:13px;color:#1a1a1a;white-space:nowrap">Aucune des entités sélectionnées.</div>
<div class="a" style="left:1269px;top:819px;width:6px;height:6px;border-radius:3px;background:#c8c8c8"></div>

<div class="a" style="left:1154px;top:107px;width:1px;height:691px;background:#ececec"></div>
<div class="a" style="left:1155px;top:107px;width:300px;height:691px;background:#fff"></div>
<div class="a" style="left:1155px;top:156px;width:1px;height:642px;background:#b4b4b4"></div><div class="a" style="left:1454px;top:156px;width:1px;height:642px;background:#c4c4c4"></div>
<div class="a" style="left:1155px;top:107px;width:300px;height:23px;background:linear-gradient(#ececec,#dcdcdc 88%,#cfcfcf)"></div>
<div class="a" style="left:1155px;top:112px;width:300px;text-align:center;font-size:12px;color:#333;padding-left:35px;line-height:14px">Liste des calques</div>
<svg class="a" style="left:1155px;top:108px" width="300" height="690" viewBox="1155 108 300 690">
<defs>
<linearGradient id="gRb" x1="0" y1="0" x2="0" y2="1"><stop offset="0" stop-color="#f8f8f8"/><stop offset="0.2" stop-color="#ececec"/><stop offset="1" stop-color="#f3f3f3"/></linearGradient>
</defs>
<circle cx="1164" cy="118" r="7" fill="#6a6a6a"/>
<path d="M1161 115 L1167 121 M1167 115 L1161 121" stroke="#e8e8e8" stroke-width="2"/>
<circle cx="1182" cy="118" r="7" fill="#6a6a6a"/>
<rect x="1180" y="114.5" width="5.5" height="4.5" fill="none" stroke="#ddd" stroke-width="1"/>
<rect x="1178.5" y="117" width="5.5" height="4.5" fill="#6a6a6a" stroke="#ddd" stroke-width="1"/>
<rect x="1155" y="130" width="300" height="26" fill="url(#gRb)"/>
<g stroke="#a8a8a8" stroke-width="1.6" fill="none">
<path d="M1156 130.8 H1454 M1155 155.5 H1454 M1155.8 130.5 V156 M1214.6 130.5 V156 M1274.3 130.5 V156 M1334.7 130.5 V156 M1395 130.5 V156 M1454 130.5 V156"/>
</g>
<!-- eye icons header -->
<ellipse cx="1185.2" cy="143.2" rx="7.5" ry="5.3" fill="#000"/><ellipse cx="1185.2" cy="143.89999999999998" rx="5.1" ry="3.3" fill="#fff"/><circle cx="1185.2" cy="143.0" r="3.2" fill="#000"/><circle cx="1184.2" cy="142.1" r="0.7" fill="#fff"/><ellipse cx="1245.2" cy="143.2" rx="7.5" ry="5.3" fill="#a6a6a6"/><ellipse cx="1245.2" cy="143.89999999999998" rx="5.1" ry="3.3" fill="#f0f0f0"/><circle cx="1245.2" cy="143.0" r="3.2" fill="#a6a6a6"/><circle cx="1244.2" cy="142.1" r="0.7" fill="#f0f0f0"/>
<path d="M1302.7 136.5 h3.2 v4.6 h4.6 v3.2 h-4.6 v4.6 h-3.2 v-4.6 h-4.6 v-3.2 h4.6 z" fill="#ff0000" stroke="#600" stroke-width="0.6"/>
<rect x="1359" y="141.2" width="12" height="3.8" fill="#ff0000" stroke="#600" stroke-width="0.6"/>
<path d="M1418 149.8 L1419.5 145 L1430.2 134.8 Q1431.8 133.8 1432.8 135 Q1433.6 136.2 1432.4 137.4 L1421.8 147.8 Z" fill="#e8a83a" stroke="#7a5010" stroke-width="0.6"/>
<path d="M1429.8 135.3 L1432.4 137.8" stroke="#e02020" stroke-width="2"/>
<!-- layer rows -->
<g stroke="#000" stroke-width="1">
<rect x="1161.5" y="163.5" width="15" height="8" fill="#fff"/>
<rect x="1161.5" y="183.5" width="15" height="8" fill="#ff0000"/>
<rect x="1161.5" y="203.5" width="15" height="8" fill="#0a8cff"/>
<rect x="1161.5" y="223.5" width="15" height="8" fill="#fff"/>
<rect x="1161.5" y="243.5" width="15" height="8" fill="#000"/>
<rect x="1161.5" y="263.5" width="15" height="8" fill="#000"/>
</g>
<ellipse cx="1422.9" cy="166.4" rx="7.5" ry="5.3" fill="#000"/><ellipse cx="1422.9" cy="167.1" rx="5.1" ry="3.3" fill="#fff"/><circle cx="1422.9" cy="166.20000000000002" r="3.2" fill="#000"/><circle cx="1421.9" cy="165.3" r="0.7" fill="#fff"/><path d="M1441.6 166.8 V164.0 Q1441.6 160.6 1445 160.6 Q1448.4 160.6 1448.4 164.0 V166.8" fill="none" stroke="#bdbdbd" stroke-width="1.3"/><rect x="1440.2" y="166.6" width="9.7" height="7" fill="#b8b8b8"/><ellipse cx="1422.9" cy="186.4" rx="7.5" ry="5.3" fill="#000"/><ellipse cx="1422.9" cy="187.1" rx="5.1" ry="3.3" fill="#fff"/><circle cx="1422.9" cy="186.20000000000002" r="3.2" fill="#000"/><circle cx="1421.9" cy="185.3" r="0.7" fill="#fff"/><path d="M1441.6 186.8 V184.0 Q1441.6 180.6 1445 180.6 Q1448.4 180.6 1448.4 184.0 V186.8" fill="none" stroke="#bdbdbd" stroke-width="1.3"/><rect x="1440.2" y="186.6" width="9.7" height="7" fill="#b8b8b8"/><ellipse cx="1422.9" cy="206.4" rx="7.5" ry="5.3" fill="#000"/><ellipse cx="1422.9" cy="207.1" rx="5.1" ry="3.3" fill="#fff"/><circle cx="1422.9" cy="206.20000000000002" r="3.2" fill="#000"/><circle cx="1421.9" cy="205.3" r="0.7" fill="#fff"/><path d="M1441.6 206.8 V204.0 Q1441.6 200.6 1445 200.6 Q1448.4 200.6 1448.4 204.0 V206.8" fill="none" stroke="#bdbdbd" stroke-width="1.3"/><rect x="1440.2" y="206.6" width="9.7" height="7" fill="#b8b8b8"/><ellipse cx="1422.9" cy="226.4" rx="7.5" ry="5.3" fill="#000"/><ellipse cx="1422.9" cy="227.1" rx="5.1" ry="3.3" fill="#fff"/><circle cx="1422.9" cy="226.20000000000002" r="3.2" fill="#000"/><circle cx="1421.9" cy="225.3" r="0.7" fill="#fff"/><path d="M1441.6 226.8 V224.0 Q1441.6 220.6 1445 220.6 Q1448.4 220.6 1448.4 224.0 V226.8" fill="none" stroke="#bdbdbd" stroke-width="1.3"/><rect x="1440.2" y="226.6" width="9.7" height="7" fill="#b8b8b8"/><ellipse cx="1422.9" cy="246.4" rx="7.5" ry="5.3" fill="#000"/><ellipse cx="1422.9" cy="247.1" rx="5.1" ry="3.3" fill="#fff"/><circle cx="1422.9" cy="246.20000000000002" r="3.2" fill="#000"/><circle cx="1421.9" cy="245.3" r="0.7" fill="#fff"/><path d="M1441.6 246.8 V244.0 Q1441.6 240.6 1445 240.6 Q1448.4 240.6 1448.4 244.0 V246.8" fill="none" stroke="#bdbdbd" stroke-width="1.3"/><rect x="1440.2" y="246.6" width="9.7" height="7" fill="#b8b8b8"/><ellipse cx="1422.9" cy="266.4" rx="7.5" ry="5.3" fill="#000"/><ellipse cx="1422.9" cy="267.09999999999997" rx="5.1" ry="3.3" fill="#fff"/><circle cx="1422.9" cy="266.2" r="3.2" fill="#000"/><circle cx="1421.9" cy="265.29999999999995" r="0.7" fill="#fff"/><path d="M1441.6 266.79999999999995 V264.0 Q1441.6 260.59999999999997 1445 260.59999999999997 Q1448.4 260.59999999999997 1448.4 264.0 V266.79999999999995" fill="none" stroke="#bdbdbd" stroke-width="1.3"/><rect x="1440.2" y="266.59999999999997" width="9.7" height="7" fill="#b8b8b8"/><path d="M1394 214.5 L1395.5 209.5 L1405.8 199.6 Q1407.2 198.6 1408.2 199.8 Q1409 201 1407.8 202.2 L1397.6 212.3 Z" fill="#e8a83a" stroke="#7a5010" stroke-width="0.6"/><path d="M1405.3 200.1 L1407.8 202.6" stroke="#e02020" stroke-width="2"/>
</svg>
<div class="a" style="left:1183px;top:157.5px;font-size:13.3px;line-height:20px;color:#111">0<br>Centre<br>Cotations<br>Defpoints<br>Mince<br>Visible</div>

<svg class="a" style="left:1455px;top:108px" width="45" height="690" viewBox="1455 108 45 690">
<defs><linearGradient id="gRd" x1="0" y1="0" x2="1" y2="0"><stop offset="0" stop-color="#f2f2f2"/><stop offset="0.6" stop-color="#dedede"/><stop offset="1" stop-color="#c6c6c6"/></linearGradient></defs>
<rect x="1455" y="108" width="45" height="690" fill="url(#gRd)"/>

<g fill="#a0a0a0"><rect x="1464" y="116" width="2" height="2"/><rect x="1470" y="116" width="2" height="2"/><rect x="1476" y="116" width="2" height="2"/><rect x="1482" y="116" width="2" height="2"/><rect x="1488" y="116" width="2" height="2"/></g>
<g stroke="#777" stroke-dasharray="1 2.2"><line x1="1463" y1="261.5" x2="1491" y2="261.5"/><line x1="1463" y1="409.5" x2="1491" y2="409.5"/></g>
<rect x="1456" y="120" width="50" height="43" rx="5" fill="#b9b9b9"/>
<rect x="1456" y="417" width="50" height="43" rx="5" fill="#b9b9b9"/>
<rect x="1463.5" y="127.5" width="27" height="27" fill="#fff" stroke="#000" stroke-width="1"/>
<rect x="1463" y="127" width="28" height="5" fill="#000"/><rect x="1464.5" y="128" width="3" height="3" fill="#fff"/>
<path d="M1470 139 L1478 136 L1478 149 L1470 152 Z" fill="#bbb" stroke="#555" stroke-width="0.6"/><path d="M1473 138 L1484 134 L1484 147 L1473 151 Z" fill="#fff" stroke="#555" stroke-width="0.6"/><path d="M1477 146 L1481 138.5 L1480.5 146 Z" fill="none" stroke="#e03030" stroke-width="0.8"/>
<rect x="1463.5" y="174.5" width="27" height="27" fill="#fff" stroke="#000" stroke-width="1"/>
<rect x="1463" y="174" width="28" height="5" fill="#000"/><rect x="1464.5" y="175" width="3" height="3" fill="#fff"/>
<rect x="1470" y="184.5" width="11" height="8" fill="#f4e6b0" stroke="#555" stroke-width="0.7"/><circle cx="1481.5" cy="193" r="5" fill="#f4e6b0" stroke="#555" stroke-width="0.7" fill-opacity="0.8"/>
<rect x="1463.5" y="220.5" width="27" height="27" fill="#fff" stroke="#000" stroke-width="1"/>
<rect x="1463" y="220" width="28" height="5" fill="#000"/><rect x="1464.5" y="221" width="3" height="3" fill="#fff"/>
<rect x="1468.5" y="229.5" width="17" height="12" rx="2.5" fill="#f2f2f2" stroke="#b8cce6" stroke-width="1"/>
<rect x="1463.5" y="276.5" width="27" height="27" fill="#fff" stroke="#000" stroke-width="1"/>
<rect x="1463" y="276" width="28" height="5" fill="#000"/><rect x="1464.5" y="277" width="3" height="3" fill="#fff"/>
<rect x="1467" y="284" width="4" height="3" fill="#000"/><rect x="1473.5" y="284.5" width="13" height="2.5" fill="none" stroke="#000" stroke-width="0.7"/><rect x="1467" y="289" width="4" height="3" fill="#000"/><rect x="1473.5" y="289.5" width="13" height="2.5" fill="none" stroke="#000" stroke-width="0.7"/><rect x="1467" y="294" width="4" height="3" fill="#000"/><rect x="1473.5" y="294.5" width="13" height="2.5" fill="none" stroke="#000" stroke-width="0.7"/>
<rect x="1463.5" y="321.5" width="27" height="27" fill="#fff" stroke="#000" stroke-width="1"/>
<rect x="1463" y="321" width="28" height="5" fill="#000"/><rect x="1464.5" y="322" width="3" height="3" fill="#fff"/>
<path d="M1469 331 Q1477 328 1485 331 L1479 339 L1479 345 L1475 345 L1475 339 Z" fill="#9a9a9a" stroke="#555" stroke-width="0.6"/>
<rect x="1463.5" y="367.5" width="27" height="27" fill="#fff" stroke="#000" stroke-width="1"/>
<rect x="1463" y="367" width="28" height="5" fill="#000"/><rect x="1464.5" y="368" width="3" height="3" fill="#fff"/>
<path d="M1468 376 L1473 379 L1473 389 L1468 392 Z" fill="#fff" stroke="#333" stroke-width="0.7"/><rect x="1473" y="379" width="12" height="10" fill="#ddd" stroke="#444" stroke-width="0.7"/><path d="M1466 384 H1489" stroke="#e07070" stroke-width="0.8" stroke-dasharray="2 1"/>
<rect x="1463.5" y="423.5" width="27" height="27" fill="#fff" stroke="#000" stroke-width="1"/>
<rect x="1463" y="423" width="28" height="5" fill="#000"/><rect x="1464.5" y="424" width="3" height="3" fill="#fff"/>
<g fill="#777"><rect x="1467" y="431" width="9" height="1"/><rect x="1467" y="434" width="8" height="1"/><rect x="1467" y="437" width="10" height="1"/><rect x="1467" y="440" width="10" height="1"/></g><rect x="1464.5" y="445" width="25" height="0.8" fill="#000"/><rect x="1478" y="446.5" width="10" height="1.5" fill="#555"/>
<rect x="1463.5" y="471.5" width="27" height="27" fill="#fff" stroke="#000" stroke-width="1"/>
<rect x="1463" y="471" width="28" height="5" fill="#000"/><rect x="1464.5" y="472" width="3" height="3" fill="#fff"/>
<rect x="1470" y="478" width="14" height="17" rx="1" fill="#c08a3e" stroke="#8a5a20" stroke-width="0.6"/><rect x="1472" y="480" width="10" height="13" fill="#f4f4f4"/><rect x="1474" y="476.5" width="6" height="3" fill="#999"/><path d="M1473.5 483h7M1473.5 485.5h7M1473.5 488h7M1473.5 490.5h5" stroke="#bbb" stroke-width="0.8"/>
</svg>

<svg class="a" style="left:0;top:150px" width="120" height="110" viewBox="0 150 120 110"><defs><radialGradient id="gRing" cx="0.5" cy="0.5" r="0.5"><stop offset="0" stop-color="#fff" stop-opacity="0.22"/><stop offset="0.76" stop-color="#fff" stop-opacity="0.3"/><stop offset="0.85" stop-color="#d0dce8" stop-opacity="0.45"/><stop offset="0.92" stop-color="#8aa4be" stop-opacity="0.8"/><stop offset="0.97" stop-color="#a6bacc" stop-opacity="0.55"/><stop offset="1" stop-color="#a6bacc" stop-opacity="0"/></radialGradient></defs><g stroke="#e06060" stroke-width="1.6"><path d="M72 191 H82 M72 225.5 H84"/></g>
<!-- click ring -->
<circle cx="61.5" cy="215.8" r="38.5" fill="url(#gRing)"/>
<!-- cursor -->
<path d="M61 216 L61 238.5 L66 234 L70 242.5 L73.5 241 L69.8 232.8 L76.5 232.5 Z" fill="#fff" stroke="#000" stroke-width="1.1" stroke-linejoin="round"/>
</svg>

</body></html>
